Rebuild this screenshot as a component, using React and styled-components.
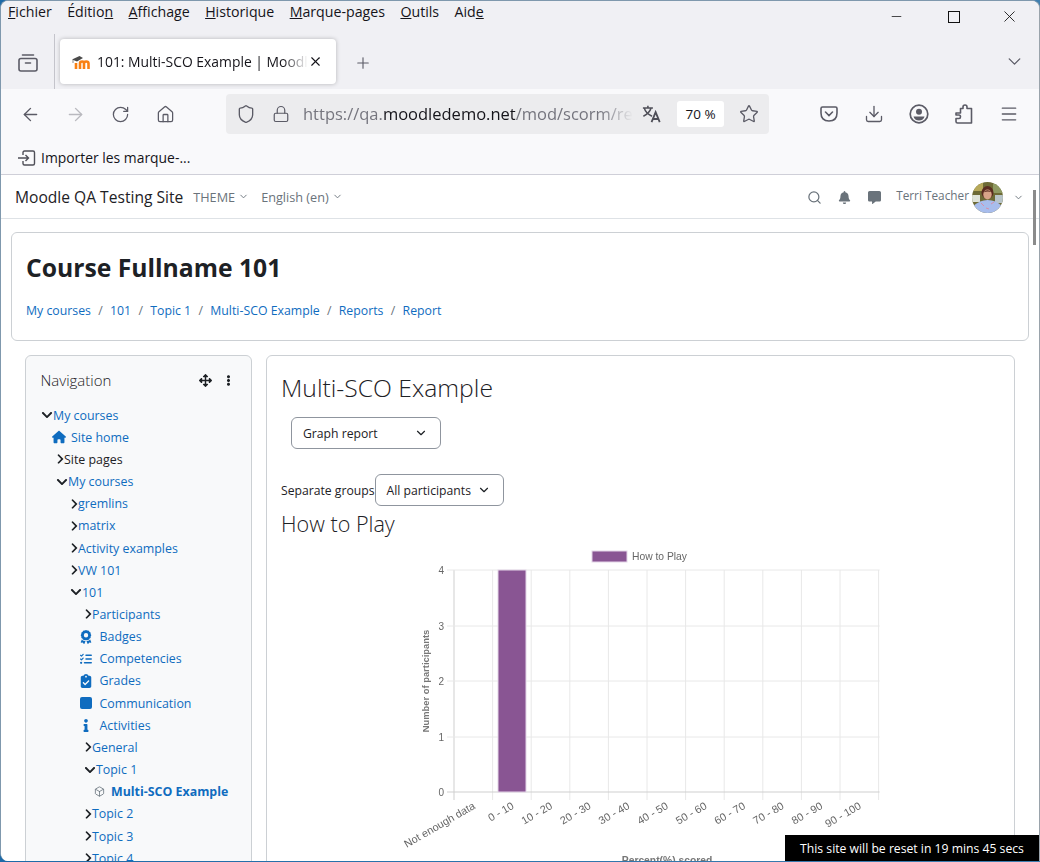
import React from "react";
import styled, { createGlobalStyle } from "styled-components";
import {
  FaChevronRight,
  FaChevronDown,
  FaArrowsAlt,
  FaEllipsisV,
  FaBell,
  FaCommentAlt,
  FaInfo,
  FaSquareFull,
} from "react-icons/fa";
import { FaHouse, FaAward, FaListCheck, FaClipboardCheck } from "react-icons/fa6";
import {
  ArrowLeft,
  ArrowRight,
  RotateCw,
  Home,
  Shield,
  Lock,
  Star,
  Download,
  Menu,
  Plus,
  X,
  ChevronDown,
  Minus,
  Box,
  Search,
} from "lucide-react";

const uiFont = `"Open Sans", "Noto Sans", sans-serif`;

const GlobalStyle = createGlobalStyle`
  html, body {
    margin: 0;
    padding: 0;
    background: #1a5c9c;
    overflow: hidden;
  }
  * {
    box-sizing: border-box;
  }
`;

const Desktop = styled.div`
  width: 1040px;
  height: 862px;
  overflow: hidden;
  background: linear-gradient(90deg, #1d6aa8, #3f7fb0);
  padding-bottom: 1px;
`;

const Window = styled.div`
  position: relative;
  width: 100%;
  height: 100%;
  overflow: hidden;
  display: flex;
  flex-direction: column;
  background: #fff;
  border: 1px solid #7f98ad;
  border-bottom: none;
  border-right-color: #9aa3ab;
  border-radius: 8px 8px 0 8px;
  font-family: ${uiFont};
  color: #15141a;
`;

const MenuBar = styled.div`
  height: 24px;
  flex: none;
  display: flex;
  align-items: center;
  justify-content: space-between;
  background: #f0f0f4;
  padding-left: 7px;
`;

const MenuItems = styled.div`
  display: flex;
  gap: 15.4px;
  font-size: 14.2px;
  margin-top: -3px;
`;

const WindowButtons = styled.div`
  display: flex;
  color: #111;
  margin-top: 6px;
  margin-right: 1px;
`;

const WindowButton = styled.span`
  width: 56.5px;
  height: 20px;
  display: flex;
  align-items: center;
  justify-content: center;
`;

const TabBar = styled.div`
  height: 64px;
  flex: none;
  display: flex;
  align-items: flex-start;
  background: #f0f0f4;
  color: #5b5b66;
`;

const ViewButton = styled.div`
  width: 53px;
  height: 64px;
  flex: none;
  display: flex;
  align-items: center;
  justify-content: center;
  padding-top: 11px;
`;

const TabSeparator = styled.div`
  width: 1px;
  height: 55px;
  margin-top: 9px;
  background: #c4c4cb;
  flex: none;
`;

const Tab = styled.div`
  width: 276px;
  height: 45px;
  margin: 14px 0 0 5px;
  flex: none;
  display: flex;
  align-items: center;
  padding: 0 13px 0 11px;
  background: #fff;
  border-radius: 4px;
  box-shadow: 0 0 4px rgba(0, 0, 0, 0.25);
  color: #15141a;
`;

const TabTitle = styled.span`
  flex: 1;
  margin-left: 6px;
  font-size: 13.9px;
  white-space: nowrap;
  overflow: hidden;
  mask-image: linear-gradient(90deg, #000 88%, transparent);
`;

const NewTab = styled.div`
  width: 52px;
  height: 64px;
  display: flex;
  align-items: center;
  justify-content: center;
  padding: 11px 0 0 2px;
`;

const TabSpacer = styled.div`
  flex: 1;
`;

const TabList = styled.div`
  width: 50px;
  height: 64px;
  display: flex;
  align-items: center;
  justify-content: center;
  padding-top: 9px;
`;

const NavBar = styled.div`
  height: 51px;
  flex: none;
  display: flex;
  align-items: center;
  background: #f9f9fb;
  color: #5b5b66;
  padding-left: 7px;
`;

const NavButton = styled.div`
  width: 45px;
  height: 40px;
  flex: none;
  display: flex;
  align-items: center;
  justify-content: center;
  opacity: ${(props) => (props.$disabled ? 0.4 : 1)};
  margin-top: -1px;
`;

const UrlBar = styled.div`
  width: 543px;
  height: 40px;
  margin: -2px 37px 0 38px;
  flex: none;
  display: flex;
  align-items: center;
  background: #ececee;
  border-radius: 4px;
  padding-left: 10px;
`;

const UrlIcon = styled.div`
  width: 20px;
  flex: none;
  display: flex;
  justify-content: center;
  margin-left: ${(props) => props.$before || 0}px;
  margin-right: ${(props) => props.$gap || 0}px;
`;

const UrlText = styled.div`
  width: 330px;
  flex: none;
  font-size: 16.5px;
  color: #75757e;
  white-space: nowrap;
  overflow: hidden;
  mask-image: linear-gradient(90deg, #000 90%, transparent);

  b {
    font-weight: 400;
    color: #15141a;
  }
`;

const ZoomBadge = styled.div`
  width: 47px;
  height: 26px;
  margin: 0 15px 0 15px;
  flex: none;
  display: flex;
  align-items: center;
  justify-content: center;
  background: #fff;
  border-radius: 3px;
  font-size: 13.5px;
  color: #15141a;
`;

const BookmarkBar = styled.div`
  height: 35px;
  flex: none;
  display: flex;
  align-items: center;
  gap: 5px;
  padding: 1px 0 0 16px;
  background: #f9f9fb;
  border-bottom: 1px solid #cfcfd8;
  font-size: 13.9px;
  color: #15141a;
`;

const Page = styled.div`
  flex: 1;
  min-height: 0;
  position: relative;
  background: #fff;
  color: #1d2125;
`;

const TopNav = styled.div`
  height: 44px;
  display: flex;
  align-items: center;
  padding: 1px 15px 0 14px;
  border-bottom: 1px solid #dee2e6;
`;

const Brand = styled.div`
  font-size: 15.6px;
  margin-right: 10px;
`;

const TopLink = styled.div`
  display: flex;
  align-items: center;
  gap: 3px;
  font-size: 12.7px;
  color: #6a737b;
  margin-right: 12px;
  margin-top: -1px;
`;

const TopSpacer = styled.div`
  flex: 1;
`;

const TopIcon = styled.div`
  display: flex;
  color: #6a737b;
  width: 30px;
  justify-content: center;
`;

const UserName = styled.div`
  font-size: 11.8px;
  color: #6a737b;
  margin-left: 7px;
  margin-top: -4px;
`;

const Avatar = styled.div`
  width: 31px;
  height: 31px;
  margin-left: 3px;
  border-radius: 50%;
  overflow: hidden;
  flex: none;
`;

const UserCaret = styled.div`
  display: flex;
  color: #6a737b;
  margin-left: 10px;
`;

const Scrollbar = styled.div`
  position: absolute;
  top: 15px;
  right: 3px;
  width: 3px;
  height: 55px;
  background: #8b8b8b;
`;

const Content = styled.div`
  padding: 13px 10px 0;
`;

const CourseHeader = styled.div`
  height: 109px;
  padding: 19px 14px 0;
  border: 1px solid #ccd0d4;
  border-radius: 6px;
`;

const CourseTitle = styled.h1`
  margin: 0;
  font-size: 24.7px;
  line-height: 32px;
  font-weight: 700;
`;

const Breadcrumb = styled.div`
  display: flex;
  gap: 7.3px;
  margin-top: 18px;
  font-size: 12.3px;
  color: #0f6cbf;

  i {
    font-style: normal;
    color: #6a737b;
  }
`;

const Columns = styled.div`
  display: flex;
  align-items: flex-start;
  gap: 14px;
  padding: 14px 14px 0;
`;

const NavBlock = styled.div`
  width: 227px;
  height: 600px;
  flex: none;
  padding: 13px 0 0;
  background: #f8f9fa;
  border: 1px solid #ccd0d4;
  border-radius: 6px;
`;

const BlockHead = styled.div`
  display: flex;
  align-items: center;
  padding: 0 0 0 14.5px;
  height: 22px;
  margin-bottom: 13px;
`;

const BlockTitle = styled.div`
  flex: 1;
  font-size: 15px;
  font-weight: 300;
  color: #1d2125;
`;

const BlockAction = styled.div`
  display: flex;
  width: 23px;
  justify-content: center;
  color: #1d2125;
  margin-right: ${(props) => props.$end || 0}px;
`;

const TreeRow = styled.div`
  height: 22.17px;
  display: flex;
  align-items: center;
  padding-left: ${(props) => props.$left}px;
  font-size: 12.4px;
  white-space: nowrap;
  color: ${(props) => (props.$plain ? "#1d2125" : "#0f6cbf")};
  font-weight: ${(props) => (props.$bold ? 700 : 400)};
`;

const TreeToggle = styled.span`
  display: flex;
  justify-content: center;
  width: ${(props) => (props.$open ? 12 : 7)}px;
  color: #1d2125;
  flex: none;
`;

const TreeIcon = styled.span`
  display: flex;
  justify-content: center;
  width: ${(props) => props.$width}px;
  margin-right: ${(props) => props.$gap}px;
  color: ${(props) => props.$color || "#0f6cbf"};
  flex: none;
`;

const MainBlock = styled.div`
  flex: 1;
  height: 600px;
  padding: 14px;
  border: 1px solid #ccd0d4;
  border-radius: 6px;
`;

const ActivityTitle = styled.h2`
  margin: 0;
  font-size: 24.7px;
  line-height: 36px;
  font-weight: 300;
`;

const GraphSelect = styled.div`
  width: 150px;
  height: 32px;
  margin: 11px 0 0 10px;
  display: flex;
  align-items: center;
  justify-content: space-between;
  padding: 0 12px 0 11px;
  border: 1px solid #8f959e;
  border-radius: 6px;
  font-size: 12.2px;
`;

const GroupRow = styled.div`
  display: flex;
  align-items: center;
  margin-top: 25px;
  font-size: 12.2px;
`;

const GroupSelect = styled(GraphSelect)`
  width: 129px;
  margin: 0;
`;

const SectionTitle = styled.h3`
  margin: 1px 0 0;
  font-size: 21.6px;
  line-height: 34px;
  font-weight: 300;
`;

const ChartSvg = styled.svg`
  display: block;
  margin: 4px 0 0 119px;
  font-family: "Liberation Sans", Arial, sans-serif;
  filter: blur(0.3px);
`;

const ResetBanner = styled.div`
  position: absolute;
  right: 0;
  bottom: 0;
  width: 254px;
  height: 26px;
  display: flex;
  align-items: center;
  justify-content: center;
  background: #000;
  color: #fff;
  font-size: 12.2px;
`;

const menus = [
  { before: "", key: "F", after: "ichier" },
  { before: "Éditio", key: "n", after: "" },
  { before: "", key: "A", after: "ffichage" },
  { before: "", key: "H", after: "istorique" },
  { before: "", key: "M", after: "arque-pages" },
  { before: "", key: "O", after: "utils" },
  { before: "Aid", key: "e", after: "" },
];

const crumbs = ["My courses", "101", "Topic 1", "Multi-SCO Example", "Reports", "Report"];

// left is the x of the row's first item inside the block
const tree = [
  { label: "My courses", left: 15, toggle: "open" },
  { label: "Site home", left: 25, icon: "home" },
  { label: "Site pages", left: 31, toggle: "closed", plain: true },
  { label: "My courses", left: 30, toggle: "open" },
  { label: "gremlins", left: 45, toggle: "closed" },
  { label: "matrix", left: 45, toggle: "closed" },
  { label: "Activity examples", left: 45, toggle: "closed" },
  { label: "VW 101", left: 45, toggle: "closed" },
  { label: "101", left: 44, toggle: "open" },
  { label: "Participants", left: 59, toggle: "closed" },
  { label: "Badges", left: 54, icon: "badge" },
  { label: "Competencies", left: 54, icon: "list" },
  { label: "Grades", left: 54, icon: "grades" },
  { label: "Communication", left: 54, icon: "square" },
  { label: "Activities", left: 54, icon: "info" },
  { label: "General", left: 59, toggle: "closed" },
  { label: "Topic 1", left: 58, toggle: "open" },
  { label: "Multi-SCO Example", left: 68, icon: "cube", bold: true },
  { label: "Topic 2", left: 59, toggle: "closed" },
  { label: "Topic 3", left: 59, toggle: "closed" },
  { label: "Topic 4", left: 59, toggle: "closed" },
];

const treeIcons = {
  home: { width: 15, gap: 5, node: <FaHouse size={14} /> },
  badge: { width: 12, gap: 7.5, node: <FaAward size={14} /> },
  list: { width: 12, gap: 7.5, node: <FaListCheck size={14} /> },
  grades: { width: 12, gap: 7.5, node: <FaClipboardCheck size={14} /> },
  square: { width: 12, gap: 7.5, node: <FaSquareFull size={12} style={{ borderRadius: 2 }} /> },
  info: { width: 12, gap: 7.5, node: <FaInfo size={13} /> },
  cube: { width: 11, gap: 6, color: "#5b6770", node: <Box size={11} strokeWidth={1.6} /> },
};

const Favicon = () => (
  <svg width="20" height="16" viewBox="0 0 20 16">
    <path d="M5 9 V15 M9 15 V9.5 Q9 7.5 11.2 7.5 Q13 7.5 13 9.5 V15 M13 9.5 Q13 7.5 15.2 7.5 Q17.5 7.5 17.5 9.5 V15" fill="none" stroke="#f98012" strokeWidth="2.6" />
    <path d="M1 5.5 L8.5 2 L12 4 L6 7.5 Z" fill="#4b4b4b" />
    <path d="M2 6 V9" stroke="#8a8a8a" strokeWidth="1" />
  </svg>
);

const RestoreIcon = () => (
  <svg width="13" height="13" viewBox="0 0 13 13" fill="none" stroke="#111" strokeWidth="1">
    <rect x="1.5" y="1.5" width="11" height="11" />
  </svg>
);

const ViewIcon = () => (
  <svg width="20" height="20" viewBox="0 0 20 20" fill="none" stroke="#5b5b66" strokeWidth="1.6">
    <rect x="1" y="5.5" width="18" height="12.5" rx="2" />
    <path d="M4.5 2 H15.5 M7.5 10 H12.5" strokeLinecap="round" />
  </svg>
);

const TranslateIcon = () => (
  <svg width="22" height="20" viewBox="0 0 22 20" fill="none" stroke="#4f4f58" strokeWidth="1.7">
    <path d="M1 3.5 H12 M6.5 1 V3.5 M2.5 3.5 Q4 9 11 12.5 M10 3.5 Q8 9.5 1.5 12.5" />
    <path d="M10.5 19 L15 8 L19.5 19 M12 15.5 H18" strokeWidth="2" />
  </svg>
);

const PocketIcon = () => (
  <svg width="18" height="16" viewBox="0 0 18 16" fill="none" stroke="#5b5b66" strokeWidth="1.6">
    <path d="M2.5 1 H15.5 Q17 1 17 2.5 V7 Q17 15 9 15 Q1 15 1 7 V2.5 Q1 1 2.5 1 Z" />
    <path d="M5.5 6 L9 9.5 L12.5 6" strokeLinecap="round" />
  </svg>
);

const AccountIcon = () => (
  <svg width="20" height="20" viewBox="0 0 20 20">
    <circle cx="10" cy="10" r="8.8" fill="none" stroke="#5b5b66" strokeWidth="1.7" />
    <circle cx="10" cy="7.7" r="3" fill="#5b5b66" />
    <path d="M4.5 12.5 H15.5 Q14.5 16.5 10 16.5 Q5.5 16.5 4.5 12.5 Z" fill="#5b5b66" />
  </svg>
);

const PuzzleIcon = () => (
  <svg width="18" height="20" viewBox="0 0 18 20" fill="none" stroke="#5b5b66" strokeWidth="1.6" strokeLinejoin="round">
    <path d="M1 9 H5.5 V4.5 H8 V3 Q8 1 10 1 Q12 1 12 3 V4.5 H16.5 V19 H2.5 Q1 19 1 17.5 V14.5 H4 Q5.5 14.5 5.5 12.8 Q5.5 11 4 11 H1 Z" />
  </svg>
);

const ImportIcon = () => (
  <svg width="19" height="16" viewBox="0 0 19 16" fill="none" stroke="#4f4f58" strokeWidth="1.4">
    <path d="M6 5 V2.5 Q6 1 7.5 1 H16 Q17.5 1 17.5 2.5 V13.5 Q17.5 15 16 15 H7.5 Q6 15 6 13.5 V11" />
    <path d="M1 8 H11.5 M8.5 5 L11.5 8 L8.5 11" />
  </svg>
);

const AvatarPhoto = () => (
  <svg width="31" height="31" viewBox="0 0 31 31">
    <rect width="31" height="31" fill="#6d6a35" />
    <rect width="11" height="9" fill="#b7a95a" />
    <rect x="21" y="2" width="10" height="9" fill="#8f9a62" />
    <rect x="0" y="13" width="8" height="7" fill="#dfe3d8" />
    <rect x="23" y="13" width="8" height="8" fill="#b8c4c8" />
    <path d="M1 31 V24 Q8 18 15.5 18 Q24 18 30 24 V31 Z" fill="#a8bdec" />
    <path d="M9 21 L12 24 M19 22 L22 20 M14 26 L17 27" stroke="#d88fa8" strokeWidth="1" />
    <ellipse cx="15.5" cy="10.5" rx="6" ry="6.5" fill="#5a2c20" />
    <ellipse cx="15.5" cy="12.5" rx="4.2" ry="5" fill="#d8a488" />
    <path d="M11.3 10.5 Q15 6.5 19.7 10 Q15 8.8 11.3 10.5 Z" fill="#5a2c20" />
  </svg>
);

const gridX = Array.from({ length: 12 }, (_, i) => 454 + i * 38.6);
const gridY = [
  { y: 570, label: "4" },
  { y: 626, label: "3" },
  { y: 681, label: "2" },
  { y: 737, label: "1" },
  { y: 792, label: "0" },
];
const xLabels = ["Not enough data", "0 - 10", "10 - 20", "20 - 30", "30 - 40", "40 - 50", "50 - 60", "60 - 70", "70 - 80", "80 - 90", "90 - 100"];

const Chart = () => (
  <ChartSvg width="500" height="325" viewBox="400 545 500 325">
    {gridX.map((x, i) => (
      <line key={x} x1={x} x2={x} y1="570" y2="800" stroke={i === 0 ? "#cfcfcf" : "#e8e8e8"} />
    ))}
    {gridY.map((row) => (
      <g key={row.y}>
        <line x1="447" x2="879.6" y1={row.y} y2={row.y} stroke={row.y === 792 ? "#cfcfcf" : "#e8e8e8"} />
        <text x="444" y={row.y + 3.5} fontSize="10" fill="#666" textAnchor="end">{row.label}</text>
      </g>
    ))}
    <rect x="498" y="570" width="28" height="222" fill="#895593" stroke="#e4d6e8" />
    <rect x="592" y="551" width="35" height="11" fill="#895593" stroke="#e4d6e8" />
    <text x="632" y="560" fontSize="10.3" fill="#666">How to Play</text>
    <text transform="translate(429 681) rotate(-90)" fontSize="9.4" fontWeight="700" fill="#777" textAnchor="middle">Number of participants</text>
    {xLabels.map((label, i) => (
      <text key={label} transform={`translate(${476 + i * 38.6} 808) rotate(-30)`} fontSize="10.8" fill="#666" textAnchor="end">{label}</text>
    ))}
    <text x="667" y="864" fontSize="10.3" fontWeight="700" fill="#777" textAnchor="middle">Percent(%) scored</text>
  </ChartSvg>
);

const App = () => (
  <Desktop>
    <GlobalStyle />
    <Window>
      <MenuBar>
        <MenuItems>
          {menus.map((menu) => (
            <span key={menu.before + menu.key}>
              {menu.before}
              <u>{menu.key}</u>
              {menu.after}
            </span>
          ))}
        </MenuItems>
        <WindowButtons>
          <WindowButton><Minus size={15} strokeWidth={1.2} /></WindowButton>
          <WindowButton><RestoreIcon /></WindowButton>
          <WindowButton><X size={19} strokeWidth={1.1} /></WindowButton>
        </WindowButtons>
      </MenuBar>

      <TabBar>
        <ViewButton><ViewIcon /></ViewButton>
        <TabSeparator />
        <Tab>
          <Favicon />
          <TabTitle>101: Multi-SCO Example | Moodle</TabTitle>
          <X size={15} color="#15141a" strokeWidth={1.8} />
        </Tab>
        <NewTab><Plus size={18} strokeWidth={1.5} /></NewTab>
        <TabSpacer />
        <TabList><ChevronDown size={21} strokeWidth={1.5} /></TabList>
      </TabBar>

      <NavBar>
        <NavButton><ArrowLeft size={21} strokeWidth={1.6} /></NavButton>
        <NavButton $disabled><ArrowRight size={21} strokeWidth={1.6} /></NavButton>
        <NavButton><RotateCw size={19} strokeWidth={1.6} /></NavButton>
        <NavButton><Home size={19} strokeWidth={1.6} /></NavButton>
        <UrlBar>
          <UrlIcon $gap={15}><Shield size={20} strokeWidth={1.6} /></UrlIcon>
          <UrlIcon $gap={12}><Lock size={18} strokeWidth={1.6} /></UrlIcon>
          <UrlText>https://qa.<b>moodledemo.net</b>/mod/scorm/rep</UrlText>
          <UrlIcon $before={9}><TranslateIcon /></UrlIcon>
          <ZoomBadge>70 %</ZoomBadge>
          <UrlIcon><Star size={20} strokeWidth={1.6} /></UrlIcon>
        </UrlBar>
        <NavButton><PocketIcon /></NavButton>
        <NavButton><Download size={20} strokeWidth={1.6} /></NavButton>
        <NavButton><AccountIcon /></NavButton>
        <NavButton><PuzzleIcon /></NavButton>
        <NavButton><Menu size={20} strokeWidth={1.6} /></NavButton>
      </NavBar>

      <BookmarkBar>
        <ImportIcon />
        <span>Importer les marque-...</span>
      </BookmarkBar>

      <Page>
        <TopNav>
          <Brand>Moodle QA Testing Site</Brand>
          <TopLink>THEME <ChevronDown size={11} /></TopLink>
          <TopLink>English (en) <ChevronDown size={11} /></TopLink>
          <TopSpacer />
          <TopIcon><Search size={15} strokeWidth={2} /></TopIcon>
          <TopIcon><FaBell size={13} /></TopIcon>
          <TopIcon><FaCommentAlt size={13} /></TopIcon>
          <UserName>Terri Teacher</UserName>
          <Avatar><AvatarPhoto /></Avatar>
          <UserCaret><ChevronDown size={11} /></UserCaret>
        </TopNav>
        <Scrollbar />
        <Content>
          <CourseHeader>
            <CourseTitle>Course Fullname 101</CourseTitle>
            <Breadcrumb>
              {crumbs.map((crumb, index) => (
                <React.Fragment key={crumb}>
                  {index > 0 && <i>/</i>}
                  <span>{crumb}</span>
                </React.Fragment>
              ))}
            </Breadcrumb>
          </CourseHeader>
          <Columns>
            <NavBlock>
              <BlockHead>
                <BlockTitle>Navigation</BlockTitle>
                <BlockAction><FaArrowsAlt size={13} /></BlockAction>
                <BlockAction $end={11}><FaEllipsisV size={11} /></BlockAction>
              </BlockHead>
              {tree.map((row, index) => {
                const icon = row.icon && treeIcons[row.icon];
                return (
                  <TreeRow key={index} $left={row.left} $plain={row.plain} $bold={row.bold}>
                    {row.toggle === "open" && (
                      <TreeToggle $open><FaChevronDown size={12} /></TreeToggle>
                    )}
                    {row.toggle === "closed" && (
                      <TreeToggle><FaChevronRight size={14} /></TreeToggle>
                    )}
                    {icon && (
                      <TreeIcon $width={icon.width} $gap={icon.gap} $color={icon.color}>{icon.node}</TreeIcon>
                    )}
                    {row.label}
                  </TreeRow>
                );
              })}
            </NavBlock>
            <MainBlock>
              <ActivityTitle>Multi-SCO Example</ActivityTitle>
              <GraphSelect>Graph report <ChevronDown size={14} strokeWidth={2} /></GraphSelect>
              <GroupRow>
                Separate groups
                <GroupSelect>All participants <ChevronDown size={14} strokeWidth={2} /></GroupSelect>
              </GroupRow>
              <SectionTitle>How to Play</SectionTitle>
              <Chart />
            </MainBlock>
          </Columns>
        </Content>
        <ResetBanner>This site will be reset in 19 mins 45 secs</ResetBanner>
      </Page>
    </Window>
  </Desktop>
);

export default App;
